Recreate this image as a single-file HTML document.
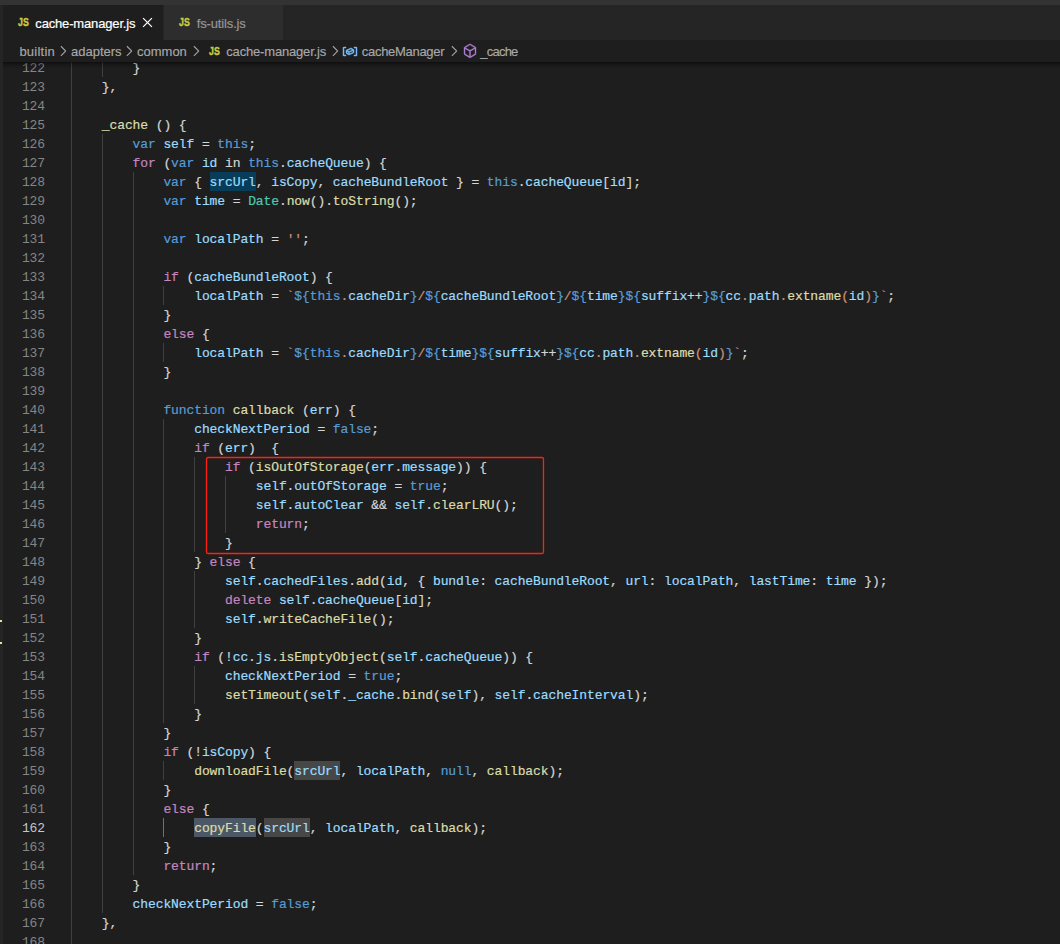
<!DOCTYPE html>
<html lang="en">
<head>
<meta charset="utf-8">
<title>cache-manager.js</title>
<style>
html,body{margin:0;padding:0;}
body{width:1060px;height:944px;overflow:hidden;position:relative;background:#1e1e1e;font-family:"Liberation Sans",sans-serif;font-size:13px;color:#d4d4d4;}
#topstrip{position:absolute;left:0;top:0;width:1060px;height:5px;background:#333333;}
#leftstrip{position:absolute;left:0;top:5px;width:3px;height:939px;background:#252526;}
#tabs{position:absolute;left:3px;top:5px;width:1057px;height:35px;background:#252526;}
.tab{position:absolute;top:0;height:35px;}
#tab1{left:0;width:160px;background:#1e1e1e;}
#tab2{left:161px;width:119px;background:#2d2d2d;}
.tab .lbl{position:absolute;top:1px;-webkit-text-stroke:0.2px;line-height:35px;white-space:nowrap;}
.js{position:absolute;font-weight:bold;color:#cbcb41;font-size:11px;line-height:11px;transform-origin:0 0;transform:scaleX(0.8);white-space:nowrap;-webkit-text-stroke:0.4px #cbcb41;}
#bc{position:absolute;left:3px;top:40px;width:1057px;height:22px;background:#1e1e1e;color:#a9a9a9;}
#bc span.bt{position:absolute;top:1px;-webkit-text-stroke:0.15px;line-height:22px;white-space:nowrap;}
#bc svg{position:absolute;}
#editor{position:absolute;left:0;top:62px;width:1060px;height:882px;overflow:hidden;}
#ed{position:absolute;left:0;top:-62px;width:1060px;height:944px;}
#shadow{position:absolute;left:3px;top:62px;width:1057px;height:6px;box-shadow:#000000 0 6px 6px -6px inset;}
.g{position:absolute;width:1px;height:19px;background:#404040;}
.h{position:absolute;height:19px;}
.ln{position:absolute;margin-top:1px;left:3px;width:42px;text-align:right;height:19px;line-height:19px;color:#858585;font-family:"Liberation Mono",monospace;font-size:13px;letter-spacing:-0.1px;white-space:pre;}
.ln.cur{color:#c6c6c6;}
.cl{position:absolute;margin-top:1px;height:19px;line-height:19px;font-family:"Liberation Mono",monospace;font-size:13px;letter-spacing:-0.1013px;white-space:pre;color:#d4d4d4;-webkit-text-stroke:0.2px;}
.k{color:#569cd6}.c{color:#c586c0}.v{color:#9cdcfe}.f{color:#dcdcaa}.t{color:#4ec9b0}.s{color:#ce9178}
#redbox{position:absolute;left:206px;top:458px;width:336px;height:93px;border:1px solid #e51c1c;border-radius:2px;}
.mk{position:absolute;left:0;width:2px;height:2px;background:#e8e0b0;}
</style>
</head>
<body>
<div id="topstrip"></div>
<div id="leftstrip"></div>
<div id="tabs">
  <div class="tab" id="tab1">
    <span class="js" style="left:15px;top:12px">JS</span>
    <span class="lbl" style="left:32.3px;color:#ffffff;letter-spacing:-0.16px">cache-manager.js</span>
    <svg style="position:absolute;left:139px;top:12.4px" width="11" height="11" viewBox="0 0 11 11"><path d="M1.1 1.1 L9.9 9.9 M9.9 1.1 L1.1 9.9" stroke="#ffffff" stroke-width="1.25" fill="none"/></svg>
  </div>
  <div class="tab" id="tab2">
    <span class="js" style="left:15px;top:12px">JS</span>
    <span class="lbl" style="left:32.7px;color:#969696;letter-spacing:-0.14px">fs-utils.js</span>
  </div>
</div>
<div id="bc">
  <span class="bt" style="left:16.4px;letter-spacing:0.23px">builtin</span>
  <svg style="left:52px;top:3px" width="16" height="16" viewBox="0 0 16 16"><path fill="#b4b4b4" stroke="#b4b4b4" stroke-width="0.25" d="M10.072 8.024L5.715 3.667l.618-.62L11 7.716v.618L6.333 13l-.618-.619 4.357-4.357z"/></svg>
  <span class="bt" style="left:68px">adapters</span>
  <svg style="left:118.3px;top:3px" width="16" height="16" viewBox="0 0 16 16"><path fill="#b4b4b4" stroke="#b4b4b4" stroke-width="0.25" d="M10.072 8.024L5.715 3.667l.618-.62L11 7.716v.618L6.333 13l-.618-.619 4.357-4.357z"/></svg>
  <span class="bt" style="left:134px">common</span>
  <svg style="left:184.5px;top:3px" width="16" height="16" viewBox="0 0 16 16"><path fill="#b4b4b4" stroke="#b4b4b4" stroke-width="0.25" d="M10.072 8.024L5.715 3.667l.618-.62L11 7.716v.618L6.333 13l-.618-.619 4.357-4.357z"/></svg>
  <span class="js" style="left:205.5px;top:6px">JS</span>
  <span class="bt" style="left:223.3px;letter-spacing:-0.18px">cache-manager.js</span>
  <svg style="left:323.5px;top:3px" width="16" height="16" viewBox="0 0 16 16"><path fill="#b4b4b4" stroke="#b4b4b4" stroke-width="0.25" d="M10.072 8.024L5.715 3.667l.618-.62L11 7.716v.618L6.333 13l-.618-.619 4.357-4.357z"/></svg>
  <svg style="left:339px;top:3px" width="16" height="16" viewBox="0 0 16 16"><path fill="#75beff" stroke="#75beff" stroke-width="0.45" d="M2 5h2V4H1.5l-.5.5v8l.5.5H4v-1H2V5zm12.5-1H12v1h2v7h-2v1h2.5l.5-.5v-8l-.5-.5zm-2.74 2.57L12 7v2.51l-.3.45-4.5 2h-.46l-2.5-1.5-.24-.43v-2.5l.3-.46 4.5-2h.46l2.5 1.5zM5 9.71l1.5.9V9.28L5 8.38v1.33zm.58-2.15l1.45.87 3.39-1.5-1.45-.87-3.39 1.5zm1.95 3.17l3.5-1.56v-1.4l-3.5 1.55v1.41z"/></svg>
  <span class="bt" style="left:358.8px;letter-spacing:-0.3px">cacheManager</span>
  <svg style="left:442.7px;top:3px" width="16" height="16" viewBox="0 0 16 16"><path fill="#b4b4b4" stroke="#b4b4b4" stroke-width="0.25" d="M10.072 8.024L5.715 3.667l.618-.62L11 7.716v.618L6.333 13l-.618-.619 4.357-4.357z"/></svg>
  <svg style="left:458.6px;top:3px" width="16" height="16" viewBox="0 0 16 16"><path fill="#b180d7" stroke="#b180d7" stroke-width="0.35" d="M13.51 4l-5-3h-1l-5 3-.49.86v6l.49.85 5 3h1l5-3 .49-.85v-6L13.51 4zm-6 9.56l-4.5-2.7V5.7l4.5 2.45v5.41zM3.27 4.7l4.74-2.84 4.74 2.84-4.74 2.59L3.27 4.7zm9.74 6.16l-4.5 2.7V8.15l4.5-2.45v5.16z"/></svg>
  <span class="bt" style="left:477.3px;letter-spacing:-0.78px">_cache</span>
</div>
<div id="editor"><div id="ed">
<i class="g" style="left:71px;top:58px"></i>
<i class="g" style="left:102px;top:58px"></i>
<i class="g" style="left:71px;top:77px"></i>
<i class="g" style="left:71px;top:96px"></i>
<i class="g" style="left:71px;top:115px"></i>
<i class="g" style="left:71px;top:134px"></i>
<i class="g" style="left:102px;top:134px"></i>
<i class="g" style="left:71px;top:153px"></i>
<i class="g" style="left:102px;top:153px"></i>
<i class="g" style="left:71px;top:172px"></i>
<i class="g" style="left:102px;top:172px"></i>
<i class="g" style="left:133px;top:172px"></i>
<i class="g" style="left:71px;top:191px"></i>
<i class="g" style="left:102px;top:191px"></i>
<i class="g" style="left:133px;top:191px"></i>
<i class="g" style="left:71px;top:210px"></i>
<i class="g" style="left:102px;top:210px"></i>
<i class="g" style="left:133px;top:210px"></i>
<i class="g" style="left:71px;top:229px"></i>
<i class="g" style="left:102px;top:229px"></i>
<i class="g" style="left:133px;top:229px"></i>
<i class="g" style="left:71px;top:248px"></i>
<i class="g" style="left:102px;top:248px"></i>
<i class="g" style="left:133px;top:248px"></i>
<i class="g" style="left:71px;top:267px"></i>
<i class="g" style="left:102px;top:267px"></i>
<i class="g" style="left:133px;top:267px"></i>
<i class="g" style="left:71px;top:286px"></i>
<i class="g" style="left:102px;top:286px"></i>
<i class="g" style="left:133px;top:286px"></i>
<i class="g" style="left:163px;top:286px"></i>
<i class="g" style="left:71px;top:305px"></i>
<i class="g" style="left:102px;top:305px"></i>
<i class="g" style="left:133px;top:305px"></i>
<i class="g" style="left:71px;top:324px"></i>
<i class="g" style="left:102px;top:324px"></i>
<i class="g" style="left:133px;top:324px"></i>
<i class="g" style="left:71px;top:343px"></i>
<i class="g" style="left:102px;top:343px"></i>
<i class="g" style="left:133px;top:343px"></i>
<i class="g" style="left:163px;top:343px"></i>
<i class="g" style="left:71px;top:362px"></i>
<i class="g" style="left:102px;top:362px"></i>
<i class="g" style="left:133px;top:362px"></i>
<i class="g" style="left:71px;top:381px"></i>
<i class="g" style="left:102px;top:381px"></i>
<i class="g" style="left:133px;top:381px"></i>
<i class="g" style="left:71px;top:400px"></i>
<i class="g" style="left:102px;top:400px"></i>
<i class="g" style="left:133px;top:400px"></i>
<i class="g" style="left:71px;top:419px"></i>
<i class="g" style="left:102px;top:419px"></i>
<i class="g" style="left:133px;top:419px"></i>
<i class="g" style="left:163px;top:419px"></i>
<i class="g" style="left:71px;top:438px"></i>
<i class="g" style="left:102px;top:438px"></i>
<i class="g" style="left:133px;top:438px"></i>
<i class="g" style="left:163px;top:438px"></i>
<i class="g" style="left:71px;top:457px"></i>
<i class="g" style="left:102px;top:457px"></i>
<i class="g" style="left:133px;top:457px"></i>
<i class="g" style="left:163px;top:457px"></i>
<i class="g" style="left:194px;top:457px"></i>
<i class="g" style="left:71px;top:476px"></i>
<i class="g" style="left:102px;top:476px"></i>
<i class="g" style="left:133px;top:476px"></i>
<i class="g" style="left:163px;top:476px"></i>
<i class="g" style="left:194px;top:476px"></i>
<i class="g" style="left:225px;top:476px"></i>
<i class="g" style="left:71px;top:495px"></i>
<i class="g" style="left:102px;top:495px"></i>
<i class="g" style="left:133px;top:495px"></i>
<i class="g" style="left:163px;top:495px"></i>
<i class="g" style="left:194px;top:495px"></i>
<i class="g" style="left:225px;top:495px"></i>
<i class="g" style="left:71px;top:514px"></i>
<i class="g" style="left:102px;top:514px"></i>
<i class="g" style="left:133px;top:514px"></i>
<i class="g" style="left:163px;top:514px"></i>
<i class="g" style="left:194px;top:514px"></i>
<i class="g" style="left:225px;top:514px"></i>
<i class="g" style="left:71px;top:533px"></i>
<i class="g" style="left:102px;top:533px"></i>
<i class="g" style="left:133px;top:533px"></i>
<i class="g" style="left:163px;top:533px"></i>
<i class="g" style="left:194px;top:533px"></i>
<i class="g" style="left:71px;top:552px"></i>
<i class="g" style="left:102px;top:552px"></i>
<i class="g" style="left:133px;top:552px"></i>
<i class="g" style="left:163px;top:552px"></i>
<i class="g" style="left:71px;top:571px"></i>
<i class="g" style="left:102px;top:571px"></i>
<i class="g" style="left:133px;top:571px"></i>
<i class="g" style="left:163px;top:571px"></i>
<i class="g" style="left:194px;top:571px"></i>
<i class="g" style="left:71px;top:590px"></i>
<i class="g" style="left:102px;top:590px"></i>
<i class="g" style="left:133px;top:590px"></i>
<i class="g" style="left:163px;top:590px"></i>
<i class="g" style="left:194px;top:590px"></i>
<i class="g" style="left:71px;top:609px"></i>
<i class="g" style="left:102px;top:609px"></i>
<i class="g" style="left:133px;top:609px"></i>
<i class="g" style="left:163px;top:609px"></i>
<i class="g" style="left:194px;top:609px"></i>
<i class="g" style="left:71px;top:628px"></i>
<i class="g" style="left:102px;top:628px"></i>
<i class="g" style="left:133px;top:628px"></i>
<i class="g" style="left:163px;top:628px"></i>
<i class="g" style="left:71px;top:647px"></i>
<i class="g" style="left:102px;top:647px"></i>
<i class="g" style="left:133px;top:647px"></i>
<i class="g" style="left:163px;top:647px"></i>
<i class="g" style="left:71px;top:666px"></i>
<i class="g" style="left:102px;top:666px"></i>
<i class="g" style="left:133px;top:666px"></i>
<i class="g" style="left:163px;top:666px"></i>
<i class="g" style="left:194px;top:666px"></i>
<i class="g" style="left:71px;top:685px"></i>
<i class="g" style="left:102px;top:685px"></i>
<i class="g" style="left:133px;top:685px"></i>
<i class="g" style="left:163px;top:685px"></i>
<i class="g" style="left:194px;top:685px"></i>
<i class="g" style="left:71px;top:704px"></i>
<i class="g" style="left:102px;top:704px"></i>
<i class="g" style="left:133px;top:704px"></i>
<i class="g" style="left:163px;top:704px"></i>
<i class="g" style="left:71px;top:723px"></i>
<i class="g" style="left:102px;top:723px"></i>
<i class="g" style="left:133px;top:723px"></i>
<i class="g" style="left:71px;top:742px"></i>
<i class="g" style="left:102px;top:742px"></i>
<i class="g" style="left:133px;top:742px"></i>
<i class="g" style="left:71px;top:761px"></i>
<i class="g" style="left:102px;top:761px"></i>
<i class="g" style="left:133px;top:761px"></i>
<i class="g" style="left:163px;top:761px"></i>
<i class="g" style="left:71px;top:780px"></i>
<i class="g" style="left:102px;top:780px"></i>
<i class="g" style="left:133px;top:780px"></i>
<i class="g" style="left:71px;top:799px"></i>
<i class="g" style="left:102px;top:799px"></i>
<i class="g" style="left:133px;top:799px"></i>
<i class="g" style="left:71px;top:818px"></i>
<i class="g" style="left:102px;top:818px"></i>
<i class="g" style="left:133px;top:818px"></i>
<i class="g" style="left:163px;top:818px;background:#707070"></i>
<i class="g" style="left:71px;top:837px"></i>
<i class="g" style="left:102px;top:837px"></i>
<i class="g" style="left:133px;top:837px"></i>
<i class="g" style="left:71px;top:856px"></i>
<i class="g" style="left:102px;top:856px"></i>
<i class="g" style="left:133px;top:856px"></i>
<i class="g" style="left:71px;top:875px"></i>
<i class="g" style="left:102px;top:875px"></i>
<i class="g" style="left:71px;top:894px"></i>
<i class="g" style="left:102px;top:894px"></i>
<i class="g" style="left:71px;top:913px"></i>
<i class="g" style="left:71px;top:932px"></i>
<i class="h" style="left:209.6px;top:172px;width:46.2px;background:#083d5a"></i>
<i class="h" style="left:294.3px;top:761px;width:46.2px;background:#474747"></i>
<i class="h" style="left:194.2px;top:818px;width:61.6px;background:#4d5866"></i>
<i class="h" style="left:263.5px;top:818px;width:46.2px;background:#474747"></i>
<div class="ln" style="top:58px">122</div>
<div class="cl" style="top:58px;left:132.6px">}</div>
<div class="ln" style="top:77px">123</div>
<div class="cl" style="top:77px;left:101.8px">},</div>
<div class="ln" style="top:96px">124</div>
<div class="ln" style="top:115px">125</div>
<div class="cl" style="top:115px;left:101.8px"><span class="f">_cache</span> () {</div>
<div class="ln" style="top:134px">126</div>
<div class="cl" style="top:134px;left:132.6px"><span class="k">var</span> <span class="v">self</span> = <span class="k">this</span>;</div>
<div class="ln" style="top:153px">127</div>
<div class="cl" style="top:153px;left:132.6px"><span class="c">for</span> (<span class="k">var</span> <span class="v">id</span> in <span class="k">this</span>.<span class="v">cacheQueue</span>) {</div>
<div class="ln" style="top:172px">128</div>
<div class="cl" style="top:172px;left:163.4px"><span class="k">var</span> { <span class="v">srcUrl</span>, <span class="v">isCopy</span>, <span class="v">cacheBundleRoot</span> } = <span class="k">this</span>.<span class="v">cacheQueue</span>[<span class="v">id</span>];</div>
<div class="ln" style="top:191px">129</div>
<div class="cl" style="top:191px;left:163.4px"><span class="k">var</span> <span class="v">time</span> = <span class="t">Date</span>.<span class="f">now</span>().<span class="f">toString</span>();</div>
<div class="ln" style="top:210px">130</div>
<div class="ln" style="top:229px">131</div>
<div class="cl" style="top:229px;left:163.4px"><span class="k">var</span> <span class="v">localPath</span> = <span class="s">&#x27;&#x27;</span>;</div>
<div class="ln" style="top:248px">132</div>
<div class="ln" style="top:267px">133</div>
<div class="cl" style="top:267px;left:163.4px"><span class="c">if</span> (<span class="v">cacheBundleRoot</span>) {</div>
<div class="ln" style="top:286px">134</div>
<div class="cl" style="top:286px;left:194.2px"><span class="v">localPath</span> = <span class="s">`</span><span class="k">${</span><span class="k">this</span><span class="s">.</span><span class="v">cacheDir</span><span class="k">}</span><span class="s">/</span><span class="k">${</span><span class="v">cacheBundleRoot</span><span class="k">}</span><span class="s">/</span><span class="k">${</span><span class="v">time</span><span class="k">}</span><span class="k">${</span><span class="v">suffix</span>++<span class="k">}</span><span class="k">${</span><span class="v">cc</span><span class="s">.</span><span class="v">path</span><span class="s">.</span><span class="f">extname</span><span class="s">(</span><span class="v">id</span><span class="s">)</span><span class="k">}</span><span class="s">`</span>;</div>
<div class="ln" style="top:305px">135</div>
<div class="cl" style="top:305px;left:163.4px">}</div>
<div class="ln" style="top:324px">136</div>
<div class="cl" style="top:324px;left:163.4px"><span class="c">else</span> {</div>
<div class="ln" style="top:343px">137</div>
<div class="cl" style="top:343px;left:194.2px"><span class="v">localPath</span> = <span class="s">`</span><span class="k">${</span><span class="k">this</span><span class="s">.</span><span class="v">cacheDir</span><span class="k">}</span><span class="s">/</span><span class="k">${</span><span class="v">time</span><span class="k">}</span><span class="k">${</span><span class="v">suffix</span>++<span class="k">}</span><span class="k">${</span><span class="v">cc</span><span class="s">.</span><span class="v">path</span><span class="s">.</span><span class="f">extname</span><span class="s">(</span><span class="v">id</span><span class="s">)</span><span class="k">}</span><span class="s">`</span>;</div>
<div class="ln" style="top:362px">138</div>
<div class="cl" style="top:362px;left:163.4px">}</div>
<div class="ln" style="top:381px">139</div>
<div class="ln" style="top:400px">140</div>
<div class="cl" style="top:400px;left:163.4px"><span class="k">function</span> <span class="f">callback</span> (<span class="v">err</span>) {</div>
<div class="ln" style="top:419px">141</div>
<div class="cl" style="top:419px;left:194.2px"><span class="v">checkNextPeriod</span> = <span class="k">false</span>;</div>
<div class="ln" style="top:438px">142</div>
<div class="cl" style="top:438px;left:194.2px"><span class="c">if</span> (<span class="v">err</span>)  {</div>
<div class="ln" style="top:457px">143</div>
<div class="cl" style="top:457px;left:225.0px"><span class="c">if</span> (<span class="f">isOutOfStorage</span>(<span class="v">err</span>.<span class="v">message</span>)) {</div>
<div class="ln" style="top:476px">144</div>
<div class="cl" style="top:476px;left:255.8px"><span class="v">self</span>.<span class="v">outOfStorage</span> = <span class="k">true</span>;</div>
<div class="ln" style="top:495px">145</div>
<div class="cl" style="top:495px;left:255.8px"><span class="v">self</span>.<span class="v">autoClear</span> &amp;&amp; <span class="v">self</span>.<span class="f">clearLRU</span>();</div>
<div class="ln" style="top:514px">146</div>
<div class="cl" style="top:514px;left:255.8px"><span class="c">return</span>;</div>
<div class="ln" style="top:533px">147</div>
<div class="cl" style="top:533px;left:225.0px">}</div>
<div class="ln" style="top:552px">148</div>
<div class="cl" style="top:552px;left:194.2px">} <span class="c">else</span> {</div>
<div class="ln" style="top:571px">149</div>
<div class="cl" style="top:571px;left:225.0px"><span class="v">self</span>.<span class="v">cachedFiles</span>.<span class="f">add</span>(<span class="v">id</span>, { <span class="v">bundle</span>: <span class="v">cacheBundleRoot</span>, <span class="v">url</span>: <span class="v">localPath</span>, <span class="v">lastTime</span>: <span class="v">time</span> });</div>
<div class="ln" style="top:590px">150</div>
<div class="cl" style="top:590px;left:225.0px"><span class="c">delete</span> <span class="v">self</span>.<span class="v">cacheQueue</span>[<span class="v">id</span>];</div>
<div class="ln" style="top:609px">151</div>
<div class="cl" style="top:609px;left:225.0px"><span class="v">self</span>.<span class="f">writeCacheFile</span>();</div>
<div class="ln" style="top:628px">152</div>
<div class="cl" style="top:628px;left:194.2px">}</div>
<div class="ln" style="top:647px">153</div>
<div class="cl" style="top:647px;left:194.2px"><span class="c">if</span> (!<span class="v">cc</span>.<span class="v">js</span>.<span class="f">isEmptyObject</span>(<span class="v">self</span>.<span class="v">cacheQueue</span>)) {</div>
<div class="ln" style="top:666px">154</div>
<div class="cl" style="top:666px;left:225.0px"><span class="v">checkNextPeriod</span> = <span class="k">true</span>;</div>
<div class="ln" style="top:685px">155</div>
<div class="cl" style="top:685px;left:225.0px"><span class="f">setTimeout</span>(<span class="v">self</span>.<span class="v">_cache</span>.<span class="f">bind</span>(<span class="v">self</span>), <span class="v">self</span>.<span class="v">cacheInterval</span>);</div>
<div class="ln" style="top:704px">156</div>
<div class="cl" style="top:704px;left:194.2px">}</div>
<div class="ln" style="top:723px">157</div>
<div class="cl" style="top:723px;left:163.4px">}</div>
<div class="ln" style="top:742px">158</div>
<div class="cl" style="top:742px;left:163.4px"><span class="c">if</span> (!<span class="v">isCopy</span>) {</div>
<div class="ln" style="top:761px">159</div>
<div class="cl" style="top:761px;left:194.2px"><span class="f">downloadFile</span>(<span class="v">srcUrl</span>, <span class="v">localPath</span>, <span class="k">null</span>, <span class="f">callback</span>);</div>
<div class="ln" style="top:780px">160</div>
<div class="cl" style="top:780px;left:163.4px">}</div>
<div class="ln" style="top:799px">161</div>
<div class="cl" style="top:799px;left:163.4px"><span class="c">else</span> {</div>
<div class="ln cur" style="top:818px">162</div>
<div class="cl" style="top:818px;left:194.2px"><span class="f">copyFile</span>(<span class="v">srcUrl</span>, <span class="v">localPath</span>, <span class="f">callback</span>);</div>
<div class="ln" style="top:837px">163</div>
<div class="cl" style="top:837px;left:163.4px">}</div>
<div class="ln" style="top:856px">164</div>
<div class="cl" style="top:856px;left:163.4px"><span class="c">return</span>;</div>
<div class="ln" style="top:875px">165</div>
<div class="cl" style="top:875px;left:132.6px">}</div>
<div class="ln" style="top:894px">166</div>
<div class="cl" style="top:894px;left:132.6px"><span class="v">checkNextPeriod</span> = <span class="k">false</span>;</div>
<div class="ln" style="top:913px">167</div>
<div class="cl" style="top:913px;left:101.8px">},</div>
<div class="ln" style="top:932px">168</div><svg style="position:absolute;left:200px;top:450px" width="350" height="110" viewBox="200 450 350 110"><rect x="206.5" y="457.5" width="337" height="96" rx="1.6" ry="1.6" fill="none" stroke="#ff2012" stroke-width="1.3"/></svg>
<i class="mk" style="top:620px"></i>
<i class="mk" style="top:642px"></i>
</div></div>
<div id="shadow"></div>
</body>
</html>
